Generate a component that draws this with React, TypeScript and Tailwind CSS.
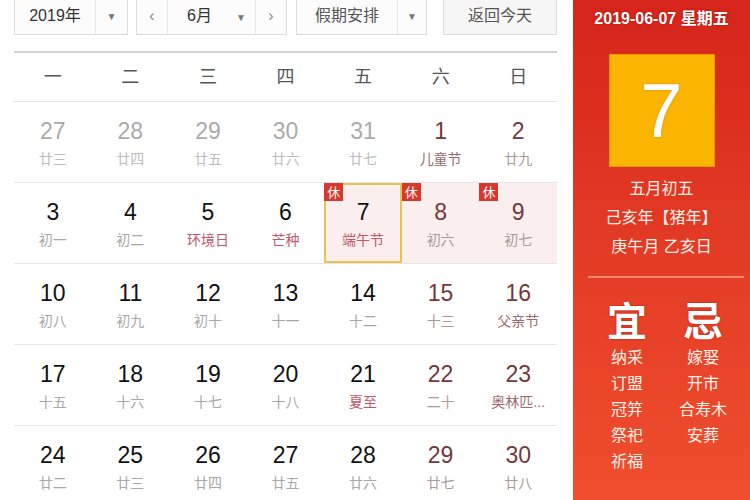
import React from 'react';

const FONT = '"Liberation Sans", "Noto Sans CJK SC", sans-serif';

type Day = {
  n: number;
  lunar: string;
  kind?: 'other' | 'weekday' | 'weekend';
  fest?: boolean;
  rest?: boolean;
  selected?: boolean;
  pink?: boolean;
};

const weeks: Day[][] = [
  [
    { n: 27, lunar: '廿三', kind: 'other' },
    { n: 28, lunar: '廿四', kind: 'other' },
    { n: 29, lunar: '廿五', kind: 'other' },
    { n: 30, lunar: '廿六', kind: 'other' },
    { n: 31, lunar: '廿七', kind: 'other' },
    { n: 1, lunar: '儿童节', kind: 'weekend', fest: true },
    { n: 2, lunar: '廿九', kind: 'weekend' },
  ],
  [
    { n: 3, lunar: '初一' },
    { n: 4, lunar: '初二' },
    { n: 5, lunar: '环境日', fest: true },
    { n: 6, lunar: '芒种', fest: true },
    { n: 7, lunar: '端午节', fest: true, rest: true, selected: true, pink: true },
    { n: 8, lunar: '初六', kind: 'weekend', rest: true, pink: true },
    { n: 9, lunar: '初七', kind: 'weekend', rest: true, pink: true },
  ],
  [
    { n: 10, lunar: '初八' },
    { n: 11, lunar: '初九' },
    { n: 12, lunar: '初十' },
    { n: 13, lunar: '十一' },
    { n: 14, lunar: '十二' },
    { n: 15, lunar: '十三', kind: 'weekend' },
    { n: 16, lunar: '父亲节', kind: 'weekend', fest: true },
  ],
  [
    { n: 17, lunar: '十五' },
    { n: 18, lunar: '十六' },
    { n: 19, lunar: '十七' },
    { n: 20, lunar: '十八' },
    { n: 21, lunar: '夏至', fest: true },
    { n: 22, lunar: '二十', kind: 'weekend' },
    { n: 23, lunar: '奥林匹...', kind: 'weekend', fest: true },
  ],
  [
    { n: 24, lunar: '廿二' },
    { n: 25, lunar: '廿三' },
    { n: 26, lunar: '廿四' },
    { n: 27, lunar: '廿五' },
    { n: 28, lunar: '廿六' },
    { n: 29, lunar: '廿七', kind: 'weekend' },
    { n: 30, lunar: '廿八', kind: 'weekend' },
  ],
];

function Caret() {
  return <span className="text-[10px] text-[#777]">▼</span>;
}

function DayCell({ d }: { d: Day }) {
  const numColor =
    d.kind === 'other' ? 'text-[#aaaaaa]' : d.kind === 'weekend' ? 'text-[#74383c]' : 'text-[#111111]';
  let lunarColor = 'text-[#a8a8a8]';
  if (d.kind === 'other') lunarColor = 'text-[#bdbdbd]';
  else if (d.fest) lunarColor = d.kind === 'weekend' ? 'text-[#9a6a6e]' : 'text-[#c4566a]';
  else if (d.kind === 'weekend') lunarColor = 'text-[#aa9a9a]';
  return (
    <div
      className={`relative flex flex-col items-center pt-[15px] ${d.pink ? 'bg-[#fbeeee]' : ''} ${
        d.selected ? 'outline-2 -outline-offset-2 outline-[#e8c44e]' : ''
      }`}
    >
      {d.rest && (
        <span className="absolute left-0 top-0 flex h-[18px] w-[19px] items-center justify-center bg-[#d8382c] text-[13px] leading-none text-white">
          休
        </span>
      )}
      <span className={`text-[23px] leading-[28px] ${numColor}`}>{d.n}</span>
      <span className={`mt-[4px] text-[14px] leading-[20px] ${lunarColor}`}>{d.lunar}</span>
    </div>
  );
}

export default function App() {
  return (
    <div className="flex h-[500px] w-[750px] overflow-hidden bg-white" style={{ fontFamily: FONT }}>
      <div className="w-[573px] shrink-0 pl-[14px] pr-[16px]">
        {/* toolbar */}
        <div className="-mt-[3px] flex h-[38px] text-[16px] text-[#333]">
          <div className="flex w-[114px] border border-[#dcdcdc] bg-[#fcfcfc]">
            <div className="flex w-[81px] items-center justify-center border-r border-[#e6e6e6]">2019年</div>
            <div className="flex flex-1 items-center justify-center">
              <Caret />
            </div>
          </div>
          <div className="ml-[8px] flex w-[151px] border border-[#dcdcdc] bg-[#fcfcfc]">
            <div className="flex w-[31px] items-center justify-center border-r border-[#e6e6e6] text-[#888]">‹</div>
            <div className="flex w-[88px] items-center border-r border-[#e6e6e6] pl-[19px]">
              <span>6月</span>
              <span className="ml-[24px]">
                <Caret />
              </span>
            </div>
            <div className="flex flex-1 items-center justify-center text-[#888]">›</div>
          </div>
          <div className="ml-[9px] flex w-[131px] border border-[#dcdcdc] bg-[#fcfcfc] text-[#555]">
            <div className="flex w-[101px] items-center justify-center border-r border-[#e6e6e6]">假期安排</div>
            <div className="flex flex-1 items-center justify-center">
              <Caret />
            </div>
          </div>
          <div className="ml-[16px] flex w-[114px] items-center justify-center border border-[#dcdcdc] bg-[#f6f6f6] text-[#555]">
            返回今天
          </div>
        </div>

        <div className="mt-[16px] h-[2px] bg-[#d2d2d2]" />

        {/* weekdays */}
        <div className="grid h-[48px] grid-cols-7 items-center text-center text-[18px] text-[#555]">
          {['一', '二', '三', '四', '五', '六', '日'].map((w) => (
            <span key={w}>{w}</span>
          ))}
        </div>

        {weeks.map((week, i) => (
          <div key={i} className="grid h-[81px] grid-cols-7 border-t border-[#e6e6e6]">
            {week.map((d, j) => (
              <DayCell key={j} d={d} />
            ))}
          </div>
        ))}
      </div>

      {/* red side panel */}
      <div className="flex flex-1 flex-col bg-linear-to-b from-[#d6241b] to-[#f04e2e] text-[#fff1e8]">
        <div className="pt-[8px] text-center text-[16px] font-bold leading-[22px] text-white [text-shadow:0_0_2px_rgba(120,0,0,0.6)]">
          2019-06-07 星期五
        </div>
        <div className="mx-auto mt-[24px] flex h-[113px] w-[106px] items-center justify-center border border-[#e59c00] bg-[#fbb400]">
          <span className="text-[76px] leading-none text-white [text-shadow:0_0_2px_rgba(180,100,0,0.5)]">7</span>
        </div>
        <div className="mt-[7px] text-center text-[16px] leading-[29px]">
          <div>五月初五</div>
          <div>己亥年【猪年】</div>
          <div>庚午月 乙亥日</div>
        </div>
        <div className="ml-[15px] mr-[6px] mt-[15px] h-[2px] bg-[#f08a70]" />
        <div className="ml-[16px] mt-[24px] grid grid-cols-[76px_76px] text-center">
          <div>
            <div className="text-[40px] font-bold leading-[40px] text-white [text-shadow:0_0_2px_rgba(120,0,0,0.6)]">宜</div>
            <div className="mt-[3px] text-[16px] leading-[26px]">
              {['纳采', '订盟', '冠笄', '祭祀', '祈福'].map((t) => (
                <div key={t}>{t}</div>
              ))}
            </div>
          </div>
          <div>
            <div className="text-[40px] font-bold leading-[40px] text-white [text-shadow:0_0_2px_rgba(120,0,0,0.6)]">忌</div>
            <div className="mt-[3px] text-[16px] leading-[26px]">
              {['嫁娶', '开市', '合寿木', '安葬'].map((t) => (
                <div key={t}>{t}</div>
              ))}
            </div>
          </div>
        </div>
      </div>
    </div>
  );
}
